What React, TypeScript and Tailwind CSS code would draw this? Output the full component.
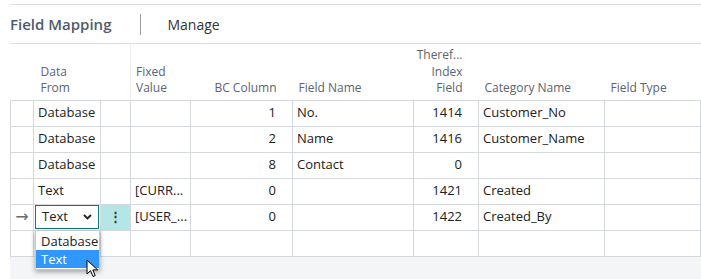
import React from 'react';

type Row = {
  from: string;
  fixed: string;
  bc: string;
  field: string;
  index: string;
  category: string;
  type: string;
};

const rows: Row[] = [
  { from: 'Database', fixed: '', bc: '1', field: 'No.', index: '1414', category: 'Customer_No', type: '' },
  { from: 'Database', fixed: '', bc: '2', field: 'Name', index: '1416', category: 'Customer_Name', type: '' },
  { from: 'Database', fixed: '', bc: '8', field: 'Contact', index: '0', category: '', type: '' },
  { from: 'Text', fixed: '[CURR...', bc: '0', field: '', index: '1421', category: 'Created', type: '' },
];

const cell = 'border border-[#d5d8dd] h-[26px] px-[4px] whitespace-nowrap overflow-hidden';
const num = 'border border-[#d5d8dd] h-[26px] pr-[16px] text-right whitespace-nowrap';

const Cursor = () => (
  <svg width="13" height="19" viewBox="0 0 13 19" className="absolute left-[50px] top-[28px]">
    <path
      d="M1 1 L1 15 L4.5 11.6 L7 17.5 L9.2 16.6 L6.8 10.9 L11.6 10.9 Z"
      fill="#fff"
      stroke="#000"
      strokeWidth="1"
      strokeLinejoin="round"
    />
  </svg>
);

export default function App() {
  return (
    <div className="w-[701px] h-[279px] bg-white overflow-hidden font-['Open_Sans',sans-serif] text-[#212121]">
      <div className="ml-[10px] mt-[4px] border-t border-[#dedede]">
        <div className="h-[38px] flex items-center">
          <span className="text-[15px] font-semibold text-[#505c6b]">Field Mapping</span>
          <span className="ml-[29px] w-px h-[21px] bg-[#9a9a9a]" />
          <span className="ml-[26px] text-[14px] text-[#333]">Manage</span>
        </div>
      </div>
      <div className="ml-[10px] border-t border-[#dedede]">
        <table className="table-fixed border-collapse w-[690px] text-[13px]">
          <colgroup>
            <col className="w-[23px]" />
            <col className="w-[67px]" />
            <col className="w-[30px]" />
            <col className="w-[60px]" />
            <col className="w-[102px]" />
            <col className="w-[121px]" />
            <col className="w-[65px]" />
            <col className="w-[126px]" />
            <col className="w-[96px]" />
          </colgroup>
          <thead>
            <tr className="h-[56px] text-[12px] leading-[16.5px] text-[#5b6470] align-bottom">
              <th className="font-normal" />
              <th className="font-normal text-left pl-[7px] pb-[3px]" colSpan={2}>
                Data
                <br />
                From
              </th>
              <th className="font-normal text-left pl-[5px] pb-[3px] border-l border-[#efefef]">
                Fixed
                <br />
                Value
              </th>
              <th className="font-normal text-right pr-[16px] pb-[3px]">BC Column</th>
              <th className="font-normal text-left pl-[6px] pb-[3px]">Field Name</th>
              <th className="font-normal text-right pr-[16px] pb-[3px]">
                Theref...
                <br />
                Index
                <br />
                Field
              </th>
              <th className="font-normal text-left pl-[6px] pb-[3px]">Category Name</th>
              <th className="font-normal text-left pl-[6px] pb-[3px]">Field Type</th>
            </tr>
          </thead>
          <tbody>
            {rows.map((r, i) => (
              <tr key={i}>
                <td className={cell} />
                <td className={cell}>{r.from}</td>
                <td className={cell} />
                <td className={cell}>{r.fixed}</td>
                <td className={num}>{r.bc}</td>
                <td className={cell}>{r.field}</td>
                <td className={num}>{r.index}</td>
                <td className={cell}>{r.category}</td>
                <td className={cell}>{r.type}</td>
              </tr>
            ))}
            <tr>
              <td className="border border-[#d5d8dd] h-[26px] p-0 text-center text-[16px] text-[#6b6b6b] font-['DejaVu_Sans',sans-serif]">
                →
              </td>
              <td className="border border-[#d5d8dd] h-[26px] p-0 relative overflow-visible">
                <div className="mx-[1px] h-[24px] border-[1.5px] border-[#0b7a78] flex items-center justify-between pl-[6px] pr-[6px] bg-white">
                  <span>Text</span>
                  <svg width="9" height="6" viewBox="0 0 9 6">
                    <path d="M1 1 L4.5 4.5 L8 1" fill="none" stroke="#222" strokeWidth="1.8" />
                  </svg>
                </div>
                <div className="absolute left-[1px] top-[25px] w-[65px] bg-white shadow-[0_2px_5px_rgba(0,0,0,0.35)] border border-[#c8c8c8] z-10 py-[1px]">
                  <div className="h-[18px] leading-[18px] pl-[5px]">Database</div>
                  <div className="h-[18px] leading-[18px] pl-[5px] bg-[#3297fd] text-white">Text</div>
                  <Cursor />
                </div>
              </td>
              <td className="border border-[#d5d8dd] h-[26px] bg-[#b4e6e7] text-center font-bold text-[#333]">⋮</td>
              <td className={cell}>[USER_...</td>
              <td className={num}>0</td>
              <td className={cell} />
              <td className={num}>1422</td>
              <td className={cell}>Created_By</td>
              <td className={cell} />
            </tr>
            <tr>
              {Array.from({ length: 9 }).map((_, i) => (
                <td key={i} className={cell} />
              ))}
            </tr>
          </tbody>
        </table>
        <div className="h-[30px] bg-[#f4f5f7]" />
      </div>
    </div>
  );
}
